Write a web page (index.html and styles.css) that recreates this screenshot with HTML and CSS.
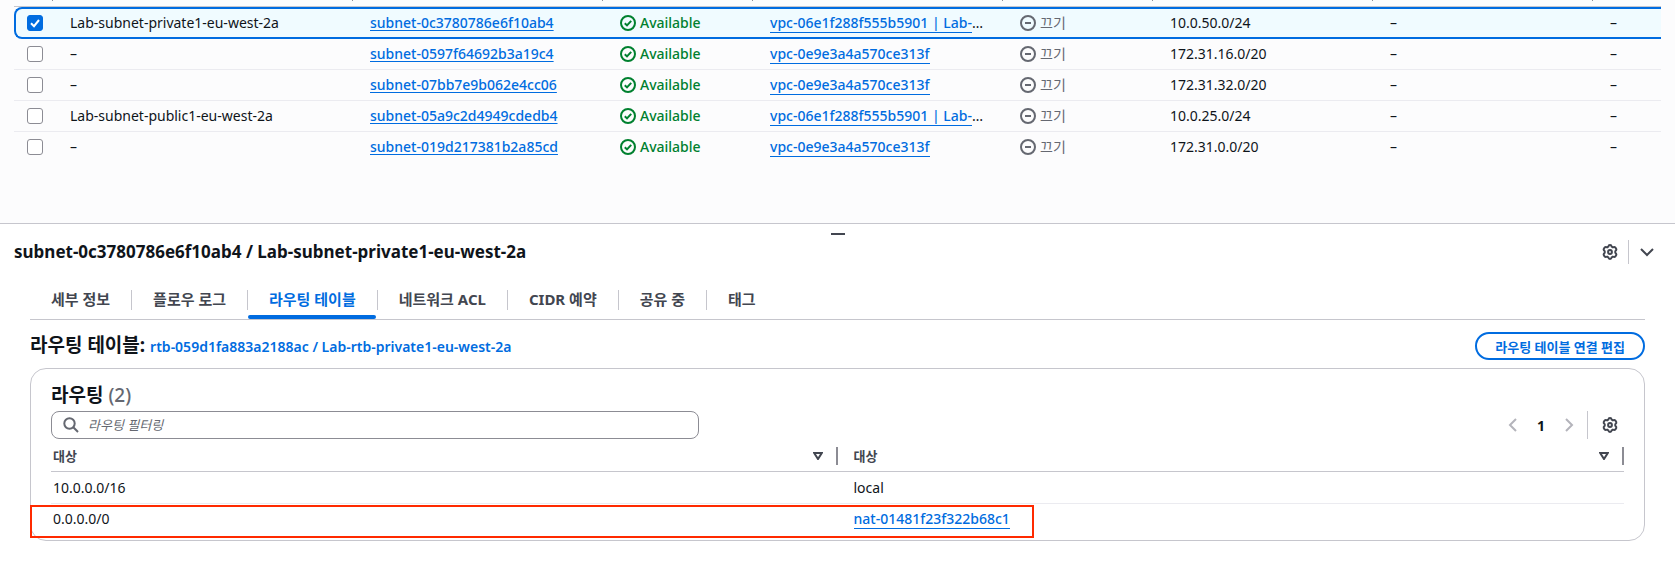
FILE: index.html
```html
<!DOCTYPE html>
<html lang="ko">
<head>
  <meta charset="UTF-8">
  <title>서브넷 | VPC</title>
  <link rel="stylesheet" href="styles.css">
</head>
<body>
  <!-- Shared icons -->
  <svg class="sprite" aria-hidden="true">
    <symbol id="icon-ok" viewBox="0 0 16 16">
      <circle cx="8" cy="8" r="7"/>
      <path d="M4.8 8.2l2.2 2.2 4.2-4.6"/>
    </symbol>
    <symbol id="icon-off" viewBox="0 0 16 16">
      <circle cx="8" cy="8" r="7"/>
      <path d="M5 8h6"/>
    </symbol>
    <symbol id="icon-gear" viewBox="0 0 16 16">
      <path d="M6.3 2.6Q6.6 1 8 1T9.7 2.6L10.9 3.3Q12.6 2.6 13.4 3.6L14.3 5.2Q14.6 6.2 13.3 7.2V8.8Q14.6 9.8 14.3 10.8L13.4 12.4Q12.6 13.4 10.9 12.7L9.7 13.4Q9.4 15 8 15T6.3 13.4L5.1 12.7Q3.4 13.4 2.6 12.4L1.7 10.8Q1.4 9.8 2.7 8.8V7.2Q1.4 6.2 1.7 5.2L2.6 3.6Q3.4 2.6 5.1 3.3Z"/>
      <circle cx="8" cy="8" r="1.9"/>
    </symbol>
    <symbol id="icon-sort" viewBox="0 0 10 8">
      <path d="M1.2 1h7.6L5 7z"/>
    </symbol>
  </svg>

  <main class="subnets">
    <table class="subnet-table">
      <colgroup>
        <col class="col-check"><col class="col-name"><col class="col-id"><col class="col-state">
        <col class="col-id"><col class="col-state"><col class="col-cidr"><col class="col-cidr"><col>
      </colgroup>
      <thead>
        <tr><th></th><th></th><th></th><th></th><th></th><th></th><th></th><th></th><th></th></tr>
      </thead>
      <tbody>
        <tr class="selected">
          <td><input type="checkbox" aria-label="Lab-subnet-private1-eu-west-2a" checked></td>
          <td>Lab-subnet-private1-eu-west-2a</td>
          <td><a class="id-link" href="#">subnet-0c3780786e6f10ab4</a></td>
          <td><span class="status ok"><svg><use href="#icon-ok"/></svg>Available</span></td>
          <td><a class="link" href="#">vpc-06e1f288f555b5901 | Lab-</a>…</td>
          <td><span class="status off"><svg><use href="#icon-off"/></svg>끄기</span></td>
          <td>10.0.50.0/24</td>
          <td>–</td>
          <td>–</td>
        </tr>
        <tr>
          <td><input type="checkbox" aria-label="subnet-0597f64692b3a19c4"></td>
          <td>–</td>
          <td><a class="id-link" href="#">subnet-0597f64692b3a19c4</a></td>
          <td><span class="status ok"><svg><use href="#icon-ok"/></svg>Available</span></td>
          <td><a class="link" href="#">vpc-0e9e3a4a570ce313f</a></td>
          <td><span class="status off"><svg><use href="#icon-off"/></svg>끄기</span></td>
          <td>172.31.16.0/20</td>
          <td>–</td>
          <td>–</td>
        </tr>
        <tr>
          <td><input type="checkbox" aria-label="subnet-07bb7e9b062e4cc06"></td>
          <td>–</td>
          <td><a class="id-link" href="#">subnet-07bb7e9b062e4cc06</a></td>
          <td><span class="status ok"><svg><use href="#icon-ok"/></svg>Available</span></td>
          <td><a class="link" href="#">vpc-0e9e3a4a570ce313f</a></td>
          <td><span class="status off"><svg><use href="#icon-off"/></svg>끄기</span></td>
          <td>172.31.32.0/20</td>
          <td>–</td>
          <td>–</td>
        </tr>
        <tr>
          <td><input type="checkbox" aria-label="Lab-subnet-public1-eu-west-2a"></td>
          <td>Lab-subnet-public1-eu-west-2a</td>
          <td><a class="id-link" href="#">subnet-05a9c2d4949cdedb4</a></td>
          <td><span class="status ok"><svg><use href="#icon-ok"/></svg>Available</span></td>
          <td><a class="link" href="#">vpc-06e1f288f555b5901 | Lab-</a>…</td>
          <td><span class="status off"><svg><use href="#icon-off"/></svg>끄기</span></td>
          <td>10.0.25.0/24</td>
          <td>–</td>
          <td>–</td>
        </tr>
        <tr>
          <td><input type="checkbox" aria-label="subnet-019d217381b2a85cd"></td>
          <td>–</td>
          <td><a class="id-link" href="#">subnet-019d217381b2a85cd</a></td>
          <td><span class="status ok"><svg><use href="#icon-ok"/></svg>Available</span></td>
          <td><a class="link" href="#">vpc-0e9e3a4a570ce313f</a></td>
          <td><span class="status off"><svg><use href="#icon-off"/></svg>끄기</span></td>
          <td>172.31.0.0/20</td>
          <td>–</td>
          <td>–</td>
        </tr>
      </tbody>
    </table>
  </main>

  <section class="panel">
    <button class="handle" aria-label="패널 크기 조정"></button>

    <header class="panel-header">
      <h2>subnet-0c3780786e6f10ab4 / Lab-subnet-private1-eu-west-2a</h2>
      <div class="panel-actions">
        <button class="icon-button" aria-label="기본 설정"><svg><use href="#icon-gear"/></svg></button>
        <span class="divider"></span>
        <button class="icon-button" aria-label="닫기"><svg viewBox="0 0 16 16"><path d="M2 5l6 6 6-6"/></svg></button>
      </div>
    </header>

    <div class="panel-body">
      <nav class="tabs">
        <a href="#">세부 정보</a>
        <a href="#">플로우 로그</a>
        <a href="#" class="active">라우팅 테이블</a>
        <a href="#">네트워크 ACL</a>
        <a href="#">CIDR 예약</a>
        <a href="#">공유 중</a>
        <a href="#">태그</a>
      </nav>

      <div class="route-header">
        <h3>라우팅 테이블: <a href="#">rtb-059d1fa883a2188ac / Lab-rtb-private1-eu-west-2a</a></h3>
        <button class="edit-button">라우팅 테이블 연결 편집</button>
      </div>

      <div class="card">
        <h3>라우팅 <span class="count">(2)</span></h3>
        <div class="toolbar">
          <div class="search">
            <svg viewBox="0 0 16 16"><circle cx="6.5" cy="6.5" r="5.2"/><path d="M10.3 10.3l4.7 4.7"/></svg>
            <input type="text" placeholder="라우팅 필터링" aria-label="라우팅 필터링">
          </div>
          <div class="pagination">
            <button class="icon-button disabled" aria-label="이전 페이지"><svg viewBox="0 0 16 16"><path d="M11 2L5 8l6 6"/></svg></button>
            <button class="page">1</button>
            <button class="icon-button disabled" aria-label="다음 페이지"><svg viewBox="0 0 16 16"><path d="M5 2l6 6-6 6"/></svg></button>
            <span class="divider"></span>
            <button class="icon-button" aria-label="테이블 설정"><svg><use href="#icon-gear"/></svg></button>
          </div>
        </div>

        <table class="route-table">
          <thead>
            <tr>
              <th><div class="th-inner">대상<svg><use href="#icon-sort"/></svg></div></th>
              <th><div class="th-inner">대상<svg><use href="#icon-sort"/></svg></div></th>
            </tr>
          </thead>
          <tbody>
            <tr><td>10.0.0.0/16</td><td>local</td></tr>
            <tr><td>0.0.0.0/0</td><td><a class="link" href="#">nat-01481f23f322b68c1</a></td></tr>
          </tbody>
        </table>
        <div class="highlight"></div>
      </div>
    </div>
  </section>
</body>
</html>
```
FILE: styles.css
```css
* {
  box-sizing: border-box;
}
body {
  margin: 0;
  background-color: #fff;
  color: #0f141a;
  font-family: "Noto Sans", "Noto Sans CJK KR", sans-serif;
  font-size: 14px;
  line-height: 20px;
}
h2, h3 {
  margin: 0;
  line-height: 24px;
}
h2 {
  font-size: 17px;
}
h3 {
  font-size: 19px;
}
a {
  color: #006ce0;
  text-decoration: none;
}
button {
  padding: 0;
  border: none;
  background: none;
  font-family: inherit;
  cursor: pointer;
}
svg {
  width: 16px;
  height: 16px;
  flex: none;
  fill: none;
  stroke: currentColor;
  stroke-width: 2;
}
table {
  width: 100%;
  table-layout: fixed;
  border-collapse: separate;
  border-spacing: 0;
}
.sprite {
  display: none;
}

/* Subnet list */
.subnets {
  padding: 0 14px 60px;
  background-color: #fcfcfd;
}
.col-check { width: 39px; }
.col-name { width: 300px; }
.col-id { width: 250px; }
.col-state { width: 150px; }
.col-cidr { width: 220px; }
.subnet-table th {
  height: 7px;
  padding: 0;
  border-bottom: 1px solid #c6c6cd;
  background: linear-gradient(#8c8c94, #8c8c94) no-repeat right top / 1px 1px;
}
.subnet-table th:last-child {
  background: none;
}
.subnet-table td {
  height: 31px;
  padding: 0 0 0 17px;
  border-bottom: 1px solid #ebebf0;
  white-space: nowrap;
}
.subnet-table td:first-child {
  padding-left: 13px;
}
.subnet-table tr:last-child td {
  border-bottom-color: transparent;
}
.subnet-table .selected td {
  height: 32px;
  border-top: 2px solid #006ce0;
  border-bottom: 2px solid #006ce0;
  background-color: #f0fbff;
}
.subnet-table .selected td:first-child {
  padding-left: 11px;
  border-left: 2px solid #006ce0;
  border-radius: 8px 0 0 8px;
}
input[type="checkbox"] {
  display: block;
  appearance: none;
  width: 16px;
  height: 16px;
  margin: 0;
  border: 1px solid #8c8c94;
  border-radius: 3px;
  background-color: #fff;
}
input[type="checkbox"]:checked {
  border-color: #006ce0;
  background: #006ce0 url("data:image/svg+xml,%3Csvg xmlns='http://www.w3.org/2000/svg' viewBox='0 0 14 14'%3E%3Cpath d='M3 7.2l3 3L11 4' fill='none' stroke='white' stroke-width='2'/%3E%3C/svg%3E") center / 14px;
}
.id-link {
  font-weight: 500;
  text-decoration: underline;
  text-underline-offset: 2px;
}
.link {
  font-weight: 500;
  border-bottom: 1px solid #006ce0;
}
.status {
  display: flex;
  align-items: center;
  gap: 4px;
}
.ok {
  color: #00802f;
  font-weight: 500;
}
.off {
  color: #656871;
}

/* Split panel */
.panel {
  border-top: 1px solid #c6c6cd;
}
.handle {
  display: block;
  width: 14px;
  height: 2px;
  margin: 9px auto 5px;
  background-color: #424650;
}
.panel-header {
  display: flex;
  justify-content: space-between;
  align-items: center;
  padding: 0 20px 0 14px;
}
.panel-actions, .pagination {
  display: flex;
  align-items: center;
  color: #424650;
}
.divider {
  width: 1px;
  height: 24px;
  margin: 0 10px;
  background-color: #c6c6cd;
}
.icon-button {
  display: flex;
  color: inherit;
}
.icon-button.disabled {
  color: #b4b4bb;
}
.panel-body {
  padding: 0 30px 22px;
}
.tabs {
  display: flex;
  margin-top: 16px;
  border-bottom: 1px solid #c6c6cd;
}
.tabs a {
  position: relative;
  height: 39px;
  padding: 9px 22px 0 21px;
  color: #424650;
  font-size: 15px;
  font-weight: 700;
}
.tabs a:not(:last-child)::after {
  content: "";
  position: absolute;
  top: 10px;
  right: 0;
  width: 1px;
  height: 20px;
  background-color: #c6c6cd;
}
.tabs a.active {
  color: #006ce0;
}
.tabs a.active::before {
  content: "";
  position: absolute;
  left: 0;
  right: 2px;
  bottom: 0;
  height: 4px;
  border-radius: 2px;
  background-color: #006ce0;
}
.route-header {
  display: flex;
  justify-content: space-between;
  align-items: center;
  margin: 12px 0 8px;
}
.route-header a {
  font-size: 14px;
  font-weight: 600;
}
.edit-button {
  height: 28px;
  padding: 0 18px;
  border: 2px solid #006ce0;
  border-radius: 14px;
  color: #006ce0;
  font-size: 13px;
  font-weight: 700;
}
.card {
  position: relative;
  padding: 14px 20px 6px;
  border: 1px solid #c6c6cd;
  border-radius: 16px;
}
.count {
  color: #656871;
  font-weight: 500;
}
.toolbar {
  display: flex;
  justify-content: space-between;
  align-items: center;
  margin-top: 4px;
}
.search {
  display: flex;
  align-items: center;
  gap: 9px;
  width: 648px;
  height: 28px;
  padding: 0 11px;
  border: 1px solid #8c8c94;
  border-radius: 8px;
  color: #656871;
}
.search input {
  flex: 1;
  padding: 0;
  border: none;
  outline: none;
  background: none;
  font-family: inherit;
  font-size: 13px;
}
.search input::placeholder {
  color: #656871;
  font-style: italic;
}
.pagination {
  padding-right: 6px;
}
.page {
  width: 40px;
  color: #0f141a;
  font-size: 14px;
  font-weight: 700;
}
.pagination .divider {
  height: 28px;
  margin: 0 14px 0 10px;
}
.route-table th {
  height: 33px;
  padding: 2px 0 0;
  border-bottom: 1px solid #c6c6cd;
  color: #424650;
  font-size: 13px;
}
.th-inner {
  display: flex;
  justify-content: space-between;
  align-items: center;
  height: 18px;
  padding: 0 13px 0 2px;
  border-right: 2px solid #8c8c94;
}
.th-inner svg {
  width: 10px;
  height: 8px;
}
.route-table td {
  height: 32px;
  padding: 0 2px;
  border-bottom: 1px solid #ebebf0;
}
.route-table tr:last-child td {
  height: 30px;
  border-bottom: none;
}
.route-table th:last-child .th-inner,
.route-table td:last-child {
  padding-left: 16px;
}

/* Marks the NAT route */
.highlight {
  position: absolute;
  left: -1px;
  bottom: 2px;
  width: calc(62% + 4px);
  height: 33px;
  border: 2px solid #ff2a00;
  pointer-events: none;
}
```
